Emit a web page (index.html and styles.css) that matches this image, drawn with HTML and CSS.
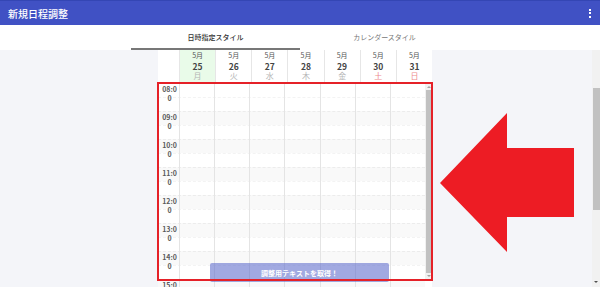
FILE: index.html
```html
<!DOCTYPE html>
<html lang="ja">
<head>
    <meta charset="utf-8">
    <meta name="viewport" content="width=device-width, initial-scale=1.0">
    <title>新規日程調整</title>
    <link rel="stylesheet" href="styles.css">
</head>
<body>

<header class="app-bar">
    <h1 class="app-title">新規日程調整</h1>
    <div class="kebab"><span></span><span></span><span></span></div>
</header>

<nav class="tabs">
    <div class="tab active">日時指定スタイル</div>
    <div class="tab">カレンダースタイル</div>
</nav>

<div class="main">
    <div class="content">
        <div class="sheet">
            <div class="day-head">
                <div class="corner"></div>
                <div class="day today"><span>5月</span><b>25</b><em>月</em></div>
                <div class="day"><span>5月</span><b>26</b><em>火</em></div>
                <div class="day"><span>5月</span><b>27</b><em>水</em></div>
                <div class="day"><span>5月</span><b>28</b><em>木</em></div>
                <div class="day"><span>5月</span><b>29</b><em>金</em></div>
                <div class="day"><span>5月</span><b>30</b><em class="holiday">土</em></div>
                <div class="day"><span>5月</span><b>31</b><em class="holiday">日</em></div>
            </div>
            <div class="body">
                <div class="grid" id="grid"></div>
                <div class="inner-scroll">
                    <div class="inner-track">
                        <div class="arrow-up"></div>
                        <div class="inner-thumb"></div>
                        <div class="arrow-down"></div>
                    </div>
                </div>
            </div>
        </div>

        <button class="get-text">調整用テキストを取得！</button>
        <div class="highlight"></div>
        <svg class="big-arrow" width="136" height="142" viewBox="0 0 136 142">
            <polygon points="0,70 67,0 67,35 134,35 134,104 67,104 67,139" fill="#ed1c24"/>
        </svg>
    </div>
    <div class="page-scroll">
        <div class="page-thumb"></div>
        <div class="page-down"></div>
    </div>
</div>

<script>
    // build the half-hour rows of the time grid
    const grid = document.getElementById('grid');
    for (let h = 8; h <= 15; h++) {
        for (let half = 0; half < 2; half++) {
            const row = document.createElement('div');
            row.className = 'slot' + (half ? ' half' : '') + (h > 8 && !half ? ' shaded' : '');
            const label = document.createElement('div');
            label.className = 'time';
            if (!half) {
                label.textContent = (h < 10 ? '0' : '') + h + ':00';
            }
            row.appendChild(label);
            for (let d = 0; d < 7; d++) {
                const cell = document.createElement('div');
                cell.className = 'cell';
                row.appendChild(cell);
            }
            grid.appendChild(row);
        }
    }
</script>

</body>
</html>
```

FILE: styles.css
```css
body {
    margin: 0;
    font-family: "Noto Sans CJK JP", "Noto Sans", sans-serif;
    width: 600px;
    height: 287px;
    overflow: hidden;
    background: #fff;
}
.app-bar {
    height: 25px;
    background: #4051c4;
    border-top: 1px solid #3446b4;
    box-sizing: border-box;
    display: flex;
    align-items: center;
    justify-content: space-between;
    padding: 0 9px 0 8px;
}
.app-title {
    margin: 0;
    font-size: 10px;
    font-weight: 500;
    color: #fff;
}
.kebab {
    display: flex;
    flex-direction: column;
    gap: 1.5px;
}
.kebab span {
    width: 2px;
    height: 2px;
    background: #fff;
}
.tabs {
    height: 25px;
    display: flex;
    justify-content: center;
    background: #fff;
}
.tab {
    width: 169px;
    text-align: center;
    font-size: 7px;
    line-height: 24px;
    color: #777;
    box-sizing: border-box;
}
.tab.active {
    color: #333;
    font-weight: 500;
    border-bottom: 2px solid #777;
}
.main {
    display: flex;
    height: 237px;
}
.content {
    flex: 1;
    background: #f4f5f9;
    position: relative;
    overflow: hidden;
}
.sheet {
    width: 274px;
    margin: 0 0 0 158px;
    background: #fff;
    height: 100%;
}
.day-head {
    display: grid;
    grid-template-columns: 21px repeat(7, 1fr);
    height: 33px;
}
.day {
    display: flex;
    flex-direction: column;
    align-items: center;
    border-left: 1px solid #e6e6e6;
    font-size: 7px;
    line-height: 10.5px;
    color: #555;
}
.day:first-of-type {
    border-left: none;
}
.day.today {
    background: #e9fbe9;
}
.day b {
    font-size: 8.5px;
    color: #444;
}
.day em {
    font-style: normal;
    font-size: 8px;
    color: #b5b5b5;
}
.day em.holiday {
    color: #ee8c8c;
}
.body {
    display: flex;
}
.grid {
    flex: 1;
}
.slot {
    display: grid;
    grid-template-columns: 21px repeat(7, 1fr);
    height: 14px;
    border-top: 1px dashed #ececec;
    box-sizing: border-box;
}
.slot.shaded {
    background: #f9f9f9;
}
.slot.half {
    border-top-color: #f3f3f3;
}
.time {
    font-size: 7px;
    font-weight: 600;
    color: #5a5a5a;
    line-height: 9px;
    padding: 1px 1px 0 3px;
    width: 17px;
    text-align: center;
    word-break: break-all;
    white-space: normal;
    height: 14px;
}
.cell {
    border-left: 1px solid #e4e4e4;
}
.inner-scroll {
    width: 7px;
}
.inner-track {
    height: 197px;
    background: #f1f1f1;
    display: flex;
    flex-direction: column;
    align-items: center;
}
.inner-thumb {
    width: 6px;
    flex: 1;
    margin: 2px 0;
    background: #c1c1c1;
}
.arrow-up {
    margin-top: 3px;
    border: 2px solid transparent;
    border-width: 0 2px 2px;
    border-bottom-color: #a3a3a3;
}
.arrow-down {
    margin-bottom: 3px;
    border: 2px solid transparent;
    border-width: 2px 2px 0;
    border-top-color: #a3a3a3;
}
.get-text {
    position: absolute;
    left: 210px;
    top: 213px;
    width: 179px;
    height: 19px;
    border: none;
    border-radius: 2px;
    background: rgba(99, 111, 205, 0.6);
    color: #fff;
    font-family: inherit;
    font-size: 7px;
    font-weight: bold;
    padding: 0;
}
.highlight {
    position: absolute;
    left: 157px;
    top: 32px;
    width: 276px;
    height: 199px;
    border: 2px solid #e52128;
    box-sizing: border-box;
}
.big-arrow {
    position: absolute;
    left: 440px;
    top: 63px;
}
.page-scroll {
    width: 8px;
    background: #f1f1f1;
    position: relative;
}
.page-thumb {
    margin: 38px 0 0 1px;
    height: 122px;
    background: #c1c1c1;
}
.page-down {
    position: absolute;
    bottom: 4px;
    left: 2px;
    border: 2px solid transparent;
    border-width: 2px 2px 0;
    border-top-color: #505050;
}
```
